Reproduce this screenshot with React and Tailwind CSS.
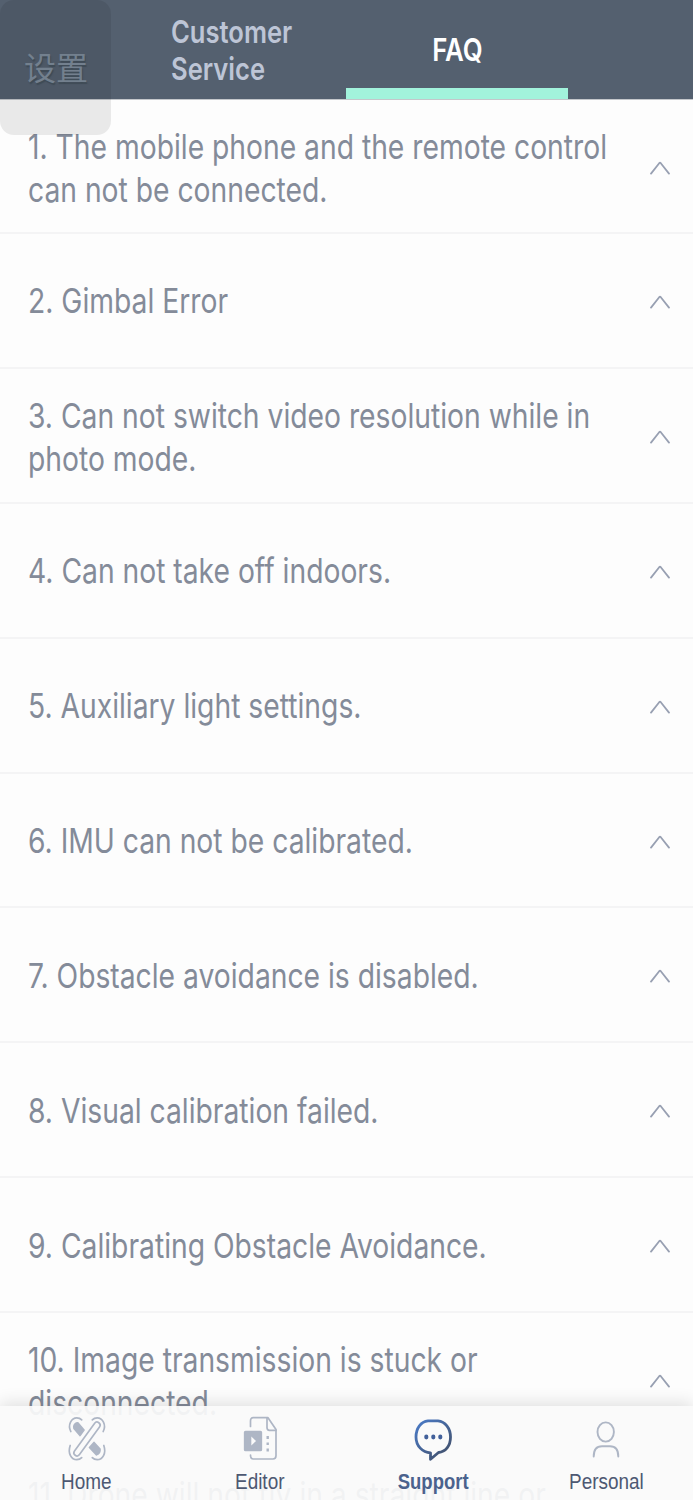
import React from 'react'

const questions = [
  ['1. The mobile phone and the remote control', 'can not be connected.'],
  ['2. Gimbal Error'],
  ['3. Can not switch video resolution while in', 'photo mode.'],
  ['4. Can not take off indoors.'],
  ['5. Auxiliary light settings.'],
  ['6. IMU can not be calibrated.'],
  ['7. Obstacle avoidance is disabled.'],
  ['8. Visual calibration failed.'],
  ['9. Calibrating Obstacle Avoidance.'],
  ['10. Image transmission is stuck or', 'disconnected.'],
  ['11. Drone will not fly in a straight line or', 'circle.'],
]

const ChevronIcon = () => (
  <svg className="w-5 h-[14px] mt-[2px] shrink-0" viewBox="0 0 20 14" fill="none" stroke="#98a0b2" strokeWidth="1.8" strokeLinecap="round" strokeLinejoin="round">
    <path d="M1 12.6 9.2 2.2Q10 1.4 10.8 2.2L19 12.6" />
  </svg>
)

const HomeIcon = () => (
  <svg className="w-10 h-[46px]" viewBox="0 0 40 46" fill="none" stroke="#aeb6c5" strokeWidth="1.7" strokeLinecap="round" strokeLinejoin="round">
    <path d="M3.8 16.5C.4 9.5 4.5 2.8 9.8 2.8Q12.8 2.8 14.7 4.8" />
    <path d="M36.2 16.5C39.6 9.5 35.5 2.8 30.2 2.8Q27.2 2.8 25.3 4.8" />
    <path d="M3.2 30.5C.4 38.5 4.5 44.7 9.8 44.7Q12.8 44.7 14.7 42.7" />
    <path d="M36.8 30.5C39.6 38.5 35.5 44.7 30.2 44.7Q27.2 44.7 25.3 42.7" />
    <path d="M6.800 11.500Q7.500 8 10.800 7.800L17 15 13 20.500 7 13.500Z" fill="#aeb6c5" />
    <path d="M27 27.500 33 34Q33.500 38 29.500 39.800L22.500 32.500Z" fill="#aeb6c5" />
    <path d="M10 37.8 30 10.2" strokeWidth="7.800" />
    <path d="M10 37.8 30 10.2" stroke="#fafafa" strokeWidth="4.500" />
  </svg>
)

const EditorIcon = () => (
  <svg className="w-10 h-[46px]" viewBox="0 0 40 46" fill="none" stroke="#aeb6c5" strokeWidth="1.7" strokeLinecap="round" strokeLinejoin="round">
    <path d="M10.5 11.5V6Q10.5 2.7 13.3 2.7H28L36 14.5V40.5Q36 44 33 44H13.3Q10.5 44 10.5 40" />
    <path d="M27 3V12.5Q27 15.3 29.5 15.3H36" />
    <rect x="4.7" y="16.5" width="16.6" height="19" rx=".8" fill="#aeb6c5" />
    <path d="M11.3 21.5V30.5L16 26Z" fill="#fafafa" stroke="none" />
    <path d="M27.7 21V24M27.7 27.5V30M27.7 33.5V36.5" strokeWidth="2.4" strokeLinecap="butt" />
  </svg>
)

const SupportIcon = () => (
  <svg className="w-10 h-[46px]" viewBox="0 0 40 46" fill="none">
    <defs>
      <linearGradient id="bubble" x1="3" y1="6" x2="36" y2="40" gradientUnits="userSpaceOnUse">
        <stop stopColor="#4a7bc8" />
        <stop offset="1" stopColor="#42506b" />
      </linearGradient>
    </defs>
    <path d="M15 5.8H25C32 6.5 37.5 13 37.5 22C37.5 31 32.5 37 25.5 37.5L17.5 44.3V37.8C9.5 37.5 3 31 3 22C3 13 8 6.5 15 5.8Z" stroke="url(#bubble)" strokeWidth="2.8" strokeLinejoin="round" />
    <g fill="#42609a">
      <ellipse cx="13.3" cy="22" rx="2.1" ry="2.4" />
      <ellipse cx="20.3" cy="22" rx="2.1" ry="2.4" />
      <ellipse cx="27.3" cy="22" rx="2.1" ry="2.4" />
    </g>
  </svg>
)

const PersonalIcon = () => (
  <svg className="w-10 h-[46px]" viewBox="0 0 40 46" fill="none" stroke="#aeb6c5" strokeWidth="1.9" strokeLinecap="round">
    <ellipse cx="19.7" cy="17" rx="8.2" ry="9.6" />
    <path d="M7.7 41.5C7.7 34.5 11 31.3 16 31.3H24C29 31.3 32.3 34.5 32.3 41.5" />
  </svg>
)

const tabs = [
  { name: 'Home', Icon: HomeIcon },
  { name: 'Editor', Icon: EditorIcon },
  { name: 'Support', Icon: SupportIcon, active: true },
  { name: 'Personal', Icon: PersonalIcon },
]

export default function App() {
  return (
    <div className="relative flex flex-col w-[693px] h-[1500px] overflow-hidden bg-[#fdfdfd] font-['Inter',sans-serif]">
      <header className="flex shrink-0 h-[99px] pl-[125px] bg-[#54606f] text-[31px] leading-[37px] font-medium">
        <div className="flex items-center w-[221px] pl-[46px] pt-px text-[#bdc5d6]">
          <span className="origin-left scale-x-[0.825] font-semibold">Customer<br />Service</span>
        </div>
        <div className="flex items-center justify-center w-[222px] pt-[2px] border-b-[11px] border-[#a2f3dc] text-white">
          <span className="pt-[9px] scale-x-[0.83] font-semibold">FAQ</span>
        </div>
      </header>

      <ul className="border-t border-[#c4c7cb]">
        {questions.map((lines) => (
          <li key={lines[0]} className="flex items-center justify-between h-[134.9px] first:h-[134px] pt-px pl-7 pr-[23px] border-b-2 border-[#f4f4f5]">
            <div className={lines.length > 1 ? 'w-[580px] pt-[2px] text-[34.5px] leading-[43px] text-[#848b99]' : 'w-[580px] text-[34.5px] leading-[43px] text-[#848b99]'}>
              {lines.map((line) => (
                <p key={line} className="origin-left scale-x-[0.819] whitespace-nowrap">{line}</p>
              ))}
            </div>
            <ChevronIcon />
          </li>
        ))}
      </ul>

      {/* settings button floating over the header */}
      <div className="absolute left-0 top-0 w-[111px] h-[135px] rounded-[14px] bg-black/8 pl-[24px] pt-[43px] text-[32px] leading-[46px] text-[#73808e] font-['Noto_Sans_CJK_SC',sans-serif] font-normal [text-shadow:1px_2px_1px_#3f4b56]">
        设置
      </div>

      <nav className="absolute inset-x-0 bottom-0 h-[94px] grid grid-cols-4 bg-[#fafafa]/93 shadow-[0_-3px_16px_rgba(0,0,0,0.12)] font-['Liberation_Sans',sans-serif] text-[22px] leading-[26px] text-[#4d5872]">
        {tabs.map(({ name, Icon, active }) => (
          <div key={name} className="flex flex-col items-center pt-[9px]">
            <Icon />
            <span className={active ? 'mt-[8px] scale-x-[0.84] font-bold text-[#4b628d]' : 'mt-[8px] scale-x-[0.86]'}>{name}</span>
          </div>
        ))}
      </nav>
    </div>
  )
}
